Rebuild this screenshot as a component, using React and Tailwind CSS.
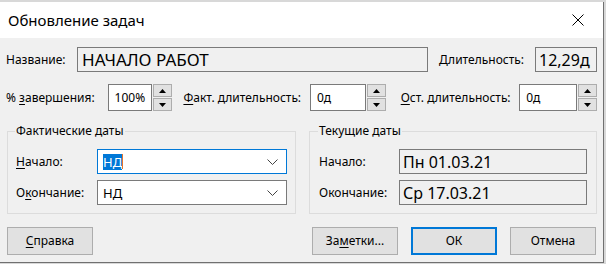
const font = { fontFamily: '"Noto Sans", "Open Sans", sans-serif' };

// подчёркнутая буква-ускоритель
const U = ({ children }) => <span className="underline underline-offset-2">{children}</span>;

const Spinner = () => (
  <div className="flex flex-col gap-px ml-px">
    <div className="w-[19px] h-[13px] bg-[#e1e1e1] border border-[#adadad] flex items-center justify-center">
      <svg width="7" height="4" viewBox="0 0 7 4"><path d="M0 4 L3.5 0 L7 4 Z" fill="#000" /></svg>
    </div>
    <div className="w-[19px] h-[13px] bg-[#e1e1e1] border border-[#adadad] flex items-center justify-center">
      <svg width="7" height="4" viewBox="0 0 7 4"><path d="M0 0 L3.5 4 L7 0 Z" fill="#000" /></svg>
    </div>
  </div>
);

const Chevron = () => (
  <svg width="11" height="6" viewBox="0 0 11 6" className="absolute right-[8px] top-[9px]">
    <path d="M0.5 0.5 L5.5 5.5 L10.5 0.5" fill="none" stroke="#444" strokeWidth="1" />
  </svg>
);

const Button = ({ children, primary }) => (
  <div
    className={`w-[86px] h-[28px] flex items-center justify-center text-[12px] text-black bg-[#e1e1e1] ${
      primary ? 'border-2 border-[#0078d7]' : 'border border-[#adadad]'
    }`}
  >
    {children}
  </div>
);

export default function App() {
  return (
    <div className="w-[606px] h-[264px] bg-[#d8d8d8] overflow-hidden" style={font}>
      <div className="mt-[2px] w-[604px] h-[261px] border-r border-b border-[#707070] bg-[#f0f0f0] flex flex-col text-black">
        {/* Заголовок окна */}
        <div className="h-[36px] bg-white flex items-center justify-between pl-[8px] pr-[19px]">
          <span className="text-[15px] text-black">Обновление задач</span>
          <svg width="12" height="12" viewBox="0 0 12 12">
            <path d="M0.5 0.5 L11.5 11.5 M11.5 0.5 L0.5 11.5" stroke="#000" strokeWidth="1" fill="none" />
          </svg>
        </div>

        <div className="flex flex-col px-[6px] pt-[9px]">
          {/* Название / Длительность */}
          <div className="flex items-center h-[25px]">
            <span className="w-[71px] text-[12px]">Название:</span>
            <div className="w-[351px] h-[25px] border border-[#7a7a7a] flex items-center pl-[4px] text-[17px]">
              НАЧАЛО РАБОТ
            </div>
            <span className="ml-[11px] w-[96px] text-[12px]">Длительность:</span>
            <div className="w-[62px] h-[25px] border border-[#7a7a7a] flex items-center pl-[3px] text-[16px]">
              12,29д
            </div>
          </div>

          {/* Процент и длительности */}
          <div className="flex items-center h-[27px] mt-[12px]">
            <span className="w-[102px] text-[12px]">
              % <U>з</U>авершения:
            </span>
            <div className="w-[45px] h-[27px] bg-white border border-[#7a7a7a] flex items-center pl-[6px] text-[12px]">
              100%
            </div>
            <Spinner />
            <span className="ml-[11px] w-[127px] text-[12px]">
              <U>Ф</U>акт. длительность:
            </span>
            <div className="w-[56px] h-[27px] bg-white border border-[#7a7a7a] flex items-center pl-[6px] text-[12px]">
              0д
            </div>
            <Spinner />
            <span className="ml-[15px] w-[119px] text-[12px]">
              <U>О</U>ст. длительность:
            </span>
            <div className="w-[58px] h-[27px] bg-white border border-[#7a7a7a] flex items-center pl-[6px] text-[12px]">
              0д
            </div>
            <Spinner />
          </div>

          {/* Группы дат */}
          <div className="flex mt-[11px] pl-[1px]">
            <fieldset className="w-[289px] border border-[#dcdcdc] pl-[8px] pr-[8px] pt-[9px] pb-[8px]">
              <legend className="text-[12px] px-[1px] -ml-[1px]">Фактические даты</legend>
              <div className="flex flex-col gap-[6px]">
                <div className="flex items-center">
                  <span className="w-[81px] text-[12px]">
                    <U>Н</U>ачало:
                  </span>
                  <div className="relative w-[190px] h-[25px] bg-white border border-[#0078d7] flex items-center pl-[5px] text-[13px] leading-[16px]">
                    <span className="bg-[#0078d7] text-white">НД</span>
                    <span className="w-px h-[15px] bg-[#e8742a]" />
                    <Chevron />
                  </div>
                </div>
                <div className="flex items-center">
                  <span className="w-[81px] text-[12px]">
                    О<U>к</U>ончание:
                  </span>
                  <div className="relative w-[190px] h-[25px] bg-white border border-[#7a7a7a] flex items-center pl-[5px] text-[13px] leading-[16px]">
                    <span className="bg-white text-black">НД</span>
                    <Chevron />
                  </div>
                </div>
              </div>
            </fieldset>

            <fieldset className="ml-[13px] w-[288px] border border-[#dcdcdc] pl-[9px] pr-[9px] pt-[9px] pb-[8px]">
              <legend className="text-[12px] px-[1px] -ml-[1px]">Текущие даты</legend>
              <div className="flex flex-col gap-[6px]">
                <div className="flex items-center">
                  <span className="w-[80px] text-[12px]">Начало:</span>
                  <div className="w-[188px] h-[25px] border border-[#7a7a7a] flex items-center pl-[3px] text-[16px]">
                    Пн 01.03.21
                  </div>
                </div>
                <div className="flex items-center">
                  <span className="w-[80px] text-[12px]">Окончание:</span>
                  <div className="w-[188px] h-[25px] border border-[#7a7a7a] flex items-center pl-[3px] text-[16px]">
                    Ср 17.03.21
                  </div>
                </div>
              </div>
            </fieldset>
          </div>

          {/* Кнопки */}
          <div className="flex items-center mt-[13px] pl-[1px]">
            <Button>
              <U>С</U>правка
            </Button>
            <div className="ml-auto flex gap-[13px] mr-[1px]">
              <Button>
                За<U>м</U>етки...
              </Button>
              <Button primary>ОК</Button>
              <Button>Отмена</Button>
            </div>
          </div>
        </div>
      </div>
    </div>
  );
}
